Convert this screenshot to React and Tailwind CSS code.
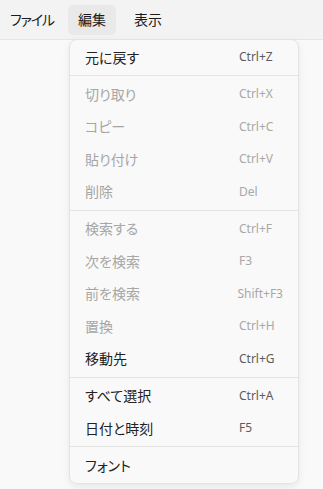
import React from 'react';

const GROUPS = [
    [{ label: '元に戻す', key: 'Ctrl+Z', on: true }],
    [
        { label: '切り取り', key: 'Ctrl+X' },
        { label: 'コピー', key: 'Ctrl+C' },
        { label: '貼り付け', key: 'Ctrl+V' },
        { label: '削除', key: 'Del' },
    ],
    [
        { label: '検索する', key: 'Ctrl+F' },
        { label: '次を検索', key: 'F3' },
        { label: '前を検索', key: 'Shift+F3' },
        { label: '置換', key: 'Ctrl+H' },
        { label: '移動先', key: 'Ctrl+G', on: true },
    ],
    [
        { label: 'すべて選択', key: 'Ctrl+A', on: true },
        { label: '日付と時刻', key: 'F5', on: true },
    ],
    [{ label: 'フォント', key: '', on: true }],
];

const jp = { fontFamily: '"Noto Sans CJK JP", "Noto Sans", sans-serif' };
const latin = { fontFamily: '"Noto Sans", "Open Sans", sans-serif' };

const App = () => {
    return (
        <div className="relative w-[323px] h-[489px] bg-[#f9f9f9] overflow-hidden [font-feature-settings:'palt']" style={jp}>
            {/* Menu bar */}
            <div className="h-[40px] bg-[#f3f3f3] border-b border-[#e6e6e6] flex items-center">
                <div className="h-[30px] w-[68px] pl-[10px] flex items-center whitespace-nowrap tracking-[-0.08em] text-[14px] text-[#1b1b1b]">ファイル</div>
                <div className="h-[30px] w-[48px] justify-center flex items-center rounded-[5px] bg-[#e9e9e9] text-[14px] text-[#1b1b1b]">編集</div>
                <div className="h-[30px] pl-[18px] flex items-center text-[14px] text-[#1b1b1b]">表示</div>
            </div>

            {/* Dropdown */}
            <div className="absolute left-[69px] top-[39px] w-[230px] bg-[#f9f9f9] border border-[#e3e3e3] rounded-[8px] py-[1px] shadow-[0_3px_8px_rgba(0,0,0,0.07)]">
                {GROUPS.map((group, gi) => (
                    <div key={gi}>
                        {gi > 0 && <div className="h-[1px] bg-[#e5e5e5] my-[1.75px]" />}
                        {group.map((item) => (
                            <div key={item.label} className="h-[32.5px] flex items-center px-[15px]">
                                <span className={`w-[154px] text-[14px] ${item.on ? 'text-[#222222]' : 'text-[#a6a6a6]'}`}>{item.label}</span>
                                <span style={latin} className={`text-[12px] ${item.on ? 'text-[#5c5c5c]' : 'text-[#a8a8a8]'}`}>{item.key}</span>
                            </div>
                        ))}
                    </div>
                ))}
            </div>
        </div>
    );
};

export default App;
